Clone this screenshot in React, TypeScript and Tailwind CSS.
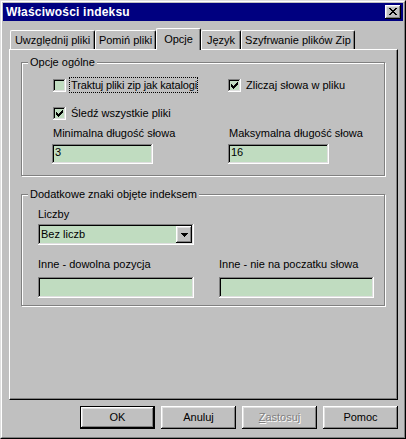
import React from "react";

const RAISED =
  "shadow-[inset_-1px_-1px_0_#000,inset_1px_1px_0_#fff,inset_-2px_-2px_0_#808080,inset_2px_2px_0_#dfdfdf]";
const SUNKEN =
  "shadow-[inset_-1px_-1px_0_#fff,inset_1px_1px_0_#808080,inset_-2px_-2px_0_#dfdfdf,inset_2px_2px_0_#000]";
const ETCHED = "border border-[#808080] shadow-[inset_1px_1px_0_#fff,1px_1px_0_#fff]";

function Check() {
  return (
    <svg width="7" height="7" viewBox="0 0 7 7" shapeRendering="crispEdges">
      <path
        fill="#000"
        d="M6 0h1v1h-1z M5 1h2v1h-2z M0 2h1v1h-1z M4 2h3v1h-3z M0 3h2v1h-2z M3 3h3v1h-3z M0 4h5v1h-5z M1 5h3v1h-3z M2 6h1v1h-1z"
      />
    </svg>
  );
}

function Checkbox({ checked }: { checked?: boolean }) {
  return (
    <div className={`w-[13px] h-[13px] shrink-0 bg-[#c0dcc0] ${SUNKEN} flex items-start justify-start pl-[3px] pt-[3px]`}>
      {checked ? <Check /> : null}
    </div>
  );
}

function Field({ className, children }: { className: string; children?: React.ReactNode }) {
  return (
    <div className={`bg-[#c0dcc0] ${SUNKEN} pl-[3px] pt-[2px] whitespace-nowrap ${className}`}>{children}</div>
  );
}

function Button({ children, isDefault, disabled }: { children: React.ReactNode; isDefault?: boolean; disabled?: boolean }) {
  const inner = (
    <div
      className={`w-full h-full ${RAISED} flex items-center justify-center ${
        disabled ? "text-[#808080] [text-shadow:1px_1px_0_#fff]" : "text-black"
      }`}
    >
      {children}
    </div>
  );
  if (isDefault) {
    return <div className="w-[75px] h-[23px] border border-black bg-[#c0c0c0]">{inner}</div>;
  }
  return <div className="w-[75px] h-[23px] bg-[#c0c0c0]">{inner}</div>;
}

function Tab({ label, width, selected }: { label: string; width: string; selected?: boolean }) {
  if (selected) {
    return (
      <div
        className={`${width} h-[22px] -mb-px relative z-10 bg-[#c0c0c0] border-t border-l border-white border-r border-r-black rounded-t-[2px] shadow-[inset_-1px_0_0_#808080] flex justify-center pt-[4px] whitespace-nowrap`}
      >
        {label}
      </div>
    );
  }
  return (
    <div
      className={`${width} h-[19px] bg-[#c0c0c0] border-t border-l border-white border-r border-r-black rounded-t-[2px] shadow-[inset_-1px_0_0_#808080] flex justify-center pt-[3px] whitespace-nowrap`}
    >
      {label}
    </div>
  );
}

export default function App() {
  return (
    <div className="w-[406px] h-[439px] bg-[#c0c0c0] font-['Liberation_Sans',Arial,sans-serif] text-[11px] leading-[13px] text-black">
      <div className="w-full h-full border border-t-[#dfdfdf] border-l-[#dfdfdf] border-r-black border-b-black">
        <div className="w-full h-full border border-t-white border-l-white border-r-[#808080] border-b-[#808080] p-px flex flex-col">
          {/* Caption */}
          <div className="h-[18px] shrink-0 bg-[#000080] flex items-center justify-between pl-[3px] pr-[2px]">
            <span className="text-white font-bold text-[12px] leading-[14px] tracking-[0.2px]">Właściwości indeksu</span>
            <div className={`w-[16px] h-[14px] bg-[#c0c0c0] ${RAISED} flex items-start justify-start pl-[4px] pt-[3px]`}>
              <svg width="8" height="7" viewBox="0 0 8 7" shapeRendering="crispEdges">
                <path
                  fill="#000"
                  d="M0 0h2v1h-2z M6 0h2v1h-2z M1 1h2v1h-2z M5 1h2v1h-2z M2 2h4v1h-4z M3 3h2v1h-2z M2 4h4v1h-4z M1 5h2v1h-2z M5 5h2v1h-2z M0 6h2v1h-2z M6 6h2v1h-2z"
                />
              </svg>
            </div>
          </div>

          {/* Tabs */}
          <div className="flex items-end h-[21px] mt-[7px] pl-[7px]">
            <Tab label="Uwzględnij pliki" width="w-[85px]" />
            <Tab label="Pomiń pliki" width="w-[61px]" />
            <Tab label="Opcje" width="w-[45px]" selected />
            <Tab label="Język" width="w-[40px]" />
            <Tab label="Szyfrwanie plików Zip" width="w-[114px]" />
          </div>

          {/* Panel */}
          <div className="ml-[6px] w-[389px] h-[351px] shrink-0 border border-t-white border-l-white border-r-black border-b-black shadow-[inset_-1px_-1px_0_#808080] flex flex-col">
            {/* Group 1 */}
            <fieldset className={`ml-[11px] mt-[6px] w-[364px] h-[120px] ${ETCHED}`}>
              <legend className="ml-[6px] px-[2px] bg-[#c0c0c0]">Opcje ogólne</legend>
              <div className="flex flex-col pl-[30px] pt-[8px]">
                <div className="flex h-[16px]">
                  <div className="w-[176px] flex items-center">
                    <div className="ml-px">
                      <Checkbox />
                    </div>
                    <div className="ml-[3px] w-[129px] h-[16px] border border-dotted border-black px-px overflow-hidden whitespace-nowrap leading-[14px] tracking-[-0.15px]">
                      Traktuj pliki zip jak katalogi
                    </div>
                  </div>
                  <div className="flex items-center">
                    <Checkbox checked />
                    <div className="ml-[3px] h-[16px] border border-transparent px-px whitespace-nowrap leading-[14px]">
                      Zliczaj słowa w pliku
                    </div>
                  </div>
                </div>
                <div className="flex items-center h-[16px] mt-[12px]">
                  <div className="ml-px">
                    <Checkbox checked />
                  </div>
                  <div className="ml-[3px] h-[16px] border border-transparent px-px whitespace-nowrap leading-[14px]">
                    Śledź wszystkie pliki
                  </div>
                </div>
                <div className="flex mt-[6px]">
                  <div className="w-[176px] flex flex-col">
                    <span className="pl-px">Minimalna długość słowa</span>
                    <Field className="mt-[4px] w-[101px] h-[20px]">3</Field>
                  </div>
                  <div className="flex flex-col">
                    <span className="pl-px">Maksymalna długość słowa</span>
                    <Field className="mt-[4px] w-[101px] h-[20px]">16</Field>
                  </div>
                </div>
              </div>
            </fieldset>

            {/* Group 2 */}
            <fieldset className={`ml-[11px] mt-[12px] w-[364px] h-[118px] ${ETCHED}`}>
              <legend className="ml-[6px] px-[2px] bg-[#c0c0c0]">Dodatkowe znaki objęte indeksem</legend>
              <div className="flex flex-col pl-[16px] pt-[7px]">
                <span>Liczby</span>
                <div className={`mt-[3px] w-[156px] h-[21px] bg-[#c0dcc0] ${SUNKEN} flex p-[2px]`}>
                  <div className="flex-1 pl-px pt-[2px] whitespace-nowrap">Bez liczb</div>
                  <div className={`w-[16px] h-full bg-[#c0c0c0] ${RAISED} flex items-center justify-center`}>
                    <svg width="7" height="4" viewBox="0 0 7 4" shapeRendering="crispEdges">
                      <path fill="#000" d="M0 0h7v1h-7z M1 1h5v1h-5z M2 2h3v1h-3z M3 3h1v1h-1z" />
                    </svg>
                  </div>
                </div>
                <div className="flex mt-[13px]">
                  <div className="w-[181px] flex flex-col">
                    <span>Inne - dowolna pozycja</span>
                    <Field className="mt-[6px] w-[156px] h-[21px]" />
                  </div>
                  <div className="flex flex-col">
                    <span>Inne - nie na poczatku słowa</span>
                    <Field className="mt-[6px] w-[155px] h-[21px]" />
                  </div>
                </div>
              </div>
            </fieldset>
          </div>

          {/* Buttons */}
          <div className="flex justify-end gap-[6px] mt-[6px] pr-[5px]">
            <Button isDefault>OK</Button>
            <Button>Anuluj</Button>
            <Button disabled>
              <span>
                <u>Z</u>astosuj
              </span>
            </Button>
            <Button>Pomoc</Button>
          </div>
        </div>
      </div>
    </div>
  );
}
